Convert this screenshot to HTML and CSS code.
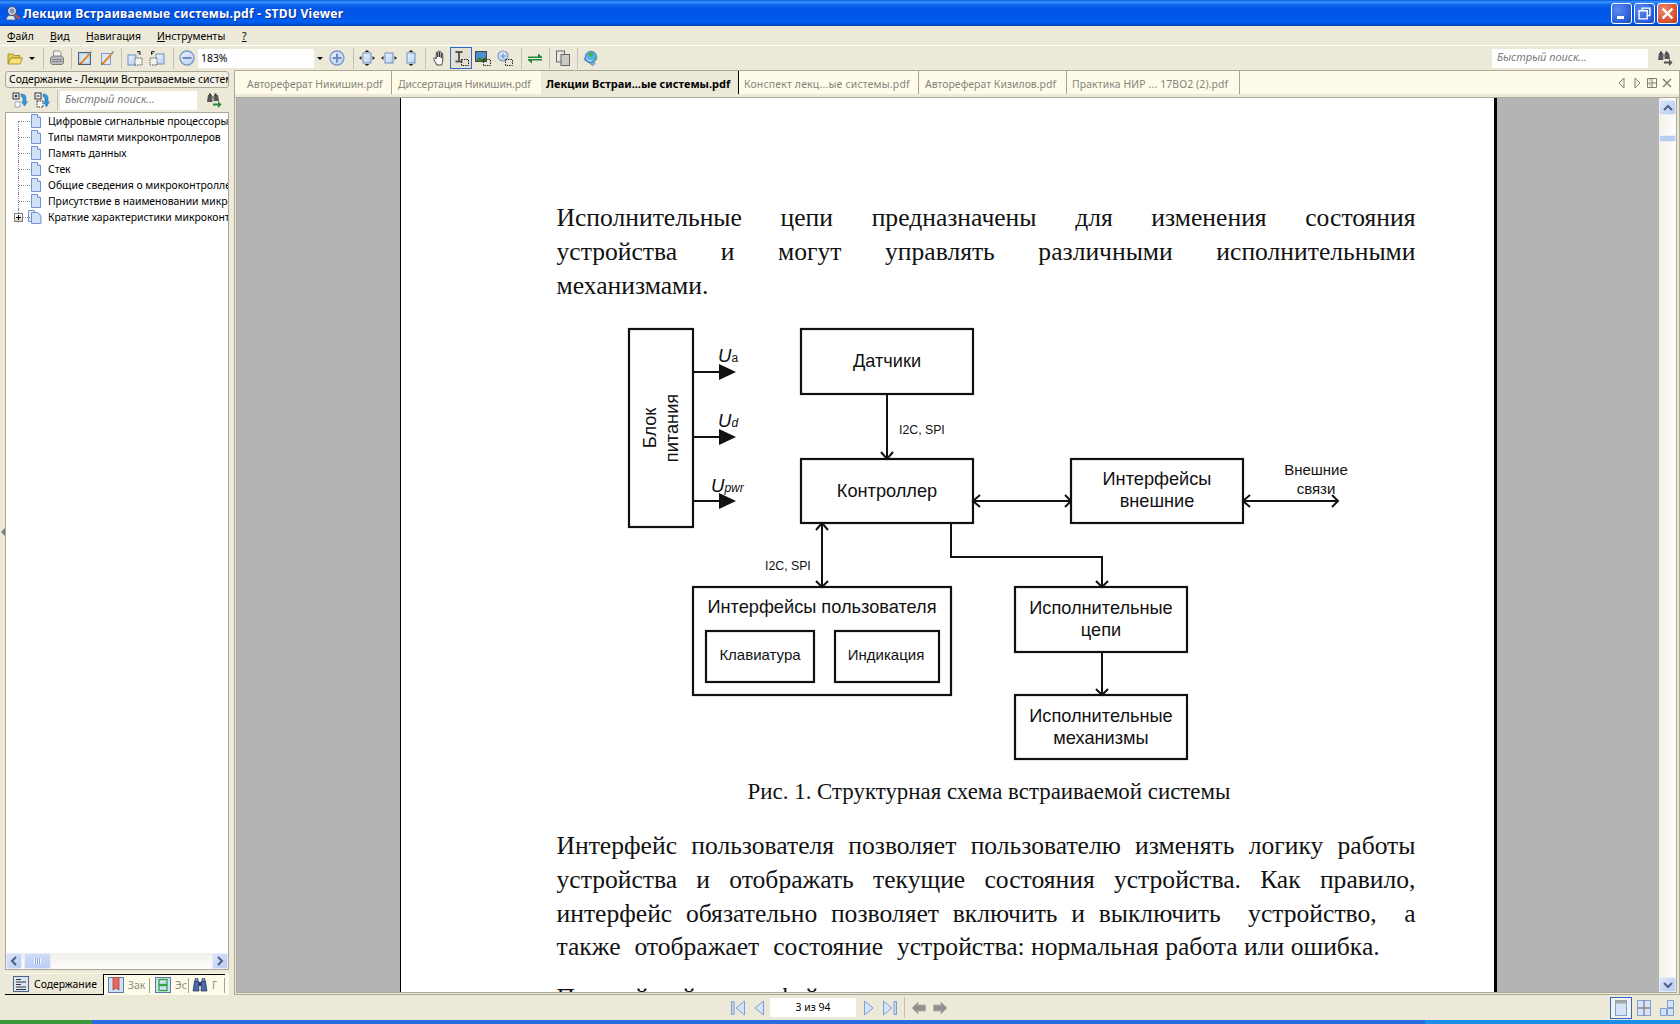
FILE: index.html
```html
<!DOCTYPE html>
<html lang="ru">
<head>
<meta charset="utf-8">
<title>STDU Viewer</title>
<link rel="stylesheet" href="styles.css">
</head>
<body>
<svg class="sprite" aria-hidden="true">
  <defs>
    <linearGradient id="gb" x1="0" y1="0" x2="1" y2="1"><stop offset="0" stop-color="#eef4fd"/><stop offset="1" stop-color="#b7cff0"/></linearGradient>
    <symbol id="i-app" viewBox="0 0 16 16"><path d="M1 15c.5-3.500 2.500-5 5-5s4 1.500 4.500 5z" fill="#dfe5ef" stroke="#4a5670" stroke-width=".8"/><circle cx="7" cy="6" r="4.500" fill="#c9d4e6" stroke="#3d4a66"/><circle cx="7" cy="6" r="2.400" fill="#7f93b8"/><path d="M10 9.500l4.500 4.500" stroke="#d0552e" stroke-width="2.400"/></symbol>
    <symbol id="i-folder" viewBox="0 0 16 16"><path d="M1 4h5l1.500 1.500H13V8H4L1 14z" fill="#e9c84f" stroke="#9a8426" stroke-width=".8"/><path d="M1 14l3-6h11.500L13 14z" fill="#f6e27c" stroke="#9a8426" stroke-width=".8"/></symbol>
    <symbol id="i-print" viewBox="0 0 16 16"><path d="M4.500 1h6l1.500 2v5h-7.500z" fill="#f4f4f4" stroke="#777" stroke-width=".8"/><path d="M1.500 8l2-2h9l2 2v5l-1.500 1.500H3L1.500 13z" fill="#b7b8bd" stroke="#666" stroke-width=".8"/><path d="M3 9.500h10M3 11.500h10" stroke="#858690"/></symbol>
    <symbol id="i-pagepen" viewBox="0 0 16 16"><rect x="1.500" y="2.500" width="12" height="12" fill="#bcd0ea" stroke="#49617f"/><rect x="3.500" y="4.500" width="8" height="8" fill="#dbe7f7"/><path d="M3.500 14l8.500-9.500" stroke="#e88a26" stroke-width="2"/><path d="M12 4.500l2.500-3" stroke="#8a8a8a" stroke-width="1.500"/><path d="M2 15l.8-2.300 1.500 1.300z" fill="#70401a"/></symbol>
    <symbol id="i-pen" viewBox="0 0 16 16"><path d="M2.500 3.500h9v11h-9z" fill="#dbe8f9" stroke="#7e9cc7"/><path d="M3.500 14l8.500-9.500" stroke="#e88a26" stroke-width="2"/><path d="M12 4.500l2.500-3" stroke="#8a8a8a" stroke-width="1.500"/><path d="M2 15l.8-2.300 1.500 1.300z" fill="#70401a"/></symbol>
    <symbol id="i-rot1" viewBox="0 0 16 16"><rect x="1" y="5" width="8" height="10" fill="url(#gb)" stroke="#6f8fc6"/><rect x="8" y="8" width="7" height="7" fill="#f4f4f0" stroke="#555" stroke-dasharray="1.500 1"/><path d="M10 1.500h3v3M13 4.500l-2-2" fill="none" stroke="#222"/></symbol>
    <symbol id="i-rot2" viewBox="0 0 16 16"><rect x="7" y="4" width="8" height="10" fill="url(#gb)" stroke="#6f8fc6"/><rect x="1" y="8" width="7" height="7" fill="#f4f4f0" stroke="#555" stroke-dasharray="1.500 1"/><path d="M5.500 1.500h-3v3M2.500 4.500l2-2" fill="none" stroke="#222"/></symbol>
    <symbol id="i-minus" viewBox="0 0 16 16"><circle cx="8" cy="8" r="7" fill="url(#gb)" stroke="#7c98c8" stroke-width="1.300"/><rect x="3.500" y="7" width="9" height="2" fill="#6e8cc1"/></symbol>
    <symbol id="i-plus" viewBox="0 0 16 16"><circle cx="8" cy="8" r="7" fill="url(#gb)" stroke="#7c98c8" stroke-width="1.300"/><path d="M3.500 7h3.500V3.500h2V7h3.500v2H9v3.500H7V9H3.500z" fill="#6e8cc1"/></symbol>
    <symbol id="i-fit" viewBox="0 0 16 16"><rect x="4" y="3" width="8" height="10" fill="url(#gb)" stroke="#6f8fc6"/><path d="M8 0l2.500 2h-5zM8 16l2.500-2h-5zM0 8l2.500-2v4zM16 8l-2.500-2v4z" fill="#222"/></symbol>
    <symbol id="i-fitw" viewBox="0 0 16 16"><rect x="4" y="3" width="8" height="10" fill="url(#gb)" stroke="#6f8fc6"/><path d="M0 8l2.500-2v4zM16 8l-2.500-2v4z" fill="#222"/></symbol>
    <symbol id="i-fith" viewBox="0 0 16 16"><rect x="4" y="3" width="8" height="10" fill="url(#gb)" stroke="#6f8fc6"/><path d="M8 0l2.500 2h-5zM8 16l2.500-2h-5z" fill="#222"/></symbol>
    <symbol id="i-hand" viewBox="1.500 0 12.500 16"><path d="M4 15C3 12 1 10 1 8.500s1.500-1 2.500.5V3c0-1.200 1.500-1.200 1.500 0V7V2c0-1.200 1.800-1.200 1.800 0v5V2.500c0-1.200 1.700-1.200 1.700 0V8V4c0-1.200 1.500-1.200 1.500 0v6c0 2-1 3-1 5z" transform="translate(1.500 0)" fill="#fdfdfd" stroke="#333" stroke-width=".9"/></symbol>
    <symbol id="i-select" viewBox="0 0 16 16"><path d="M2.500 2h7M2.500 11.500h7M6 2v9.500" stroke="#555" stroke-width="1.900" fill="none"/><rect x="8.500" y="9.500" width="7" height="6" fill="none" stroke="#222" stroke-dasharray="1.500 1"/></symbol>
    <symbol id="i-image" viewBox="0 0 16 16"><rect x=".5" y="1.500" width="11" height="10" fill="#4d8fd0" stroke="#444"/><path d="M1 11l3-4 3 2 4-2v4z" fill="#3f7d2c"/><rect x="8.500" y="9.500" width="7" height="6" fill="none" stroke="#222" stroke-dasharray="1.500 1"/></symbol>
    <symbol id="i-zoomsel" viewBox="0 0 16 16"><circle cx="6" cy="6" r="5" fill="url(#gb)" stroke="#7c98c8" stroke-width="1.200"/><path d="M3 5.500h2.500V3h1v2.500H9v1H6.500V9h-1V6.500H3z" fill="#6e8cc1"/><rect x="8.500" y="9.500" width="7" height="6" fill="none" stroke="#222" stroke-dasharray="1.500 1"/></symbol>
    <symbol id="i-sync" viewBox="0 0 16 16"><path d="M1 6.500h10V3.500l4 3.300v1.200H1zM15 10.500H5v3l-4-3.300V9h14z" fill="#1f8a3a"/></symbol>
    <symbol id="i-copy" viewBox="0 0 16 16"><rect x="1.500" y="1" width="8" height="11" fill="#e6e6e2" stroke="#666"/><rect x="6" y="4.500" width="8.500" height="11" fill="#c9c9c6" stroke="#666"/></symbol>
    <symbol id="i-globe" viewBox="0 0 16 16"><path d="M1 9.500l2-3 9 7-2 2z" fill="#8cc0ec" stroke="#40689e" stroke-width=".7"/><circle cx="8" cy="7" r="5.800" fill="#58aee8" stroke="#2f6ea8" stroke-width=".7"/><path d="M5 3.500l4-1.500 1.500 2.500-2.500 2.500-2.500-1.500zM11 8l2.500-1-1.500 4z" fill="#47b04a"/><path d="M3.500 8c1 2 3 3 5 3" fill="none" stroke="#e8f4fd"/></symbol>
    <symbol id="i-binogo" viewBox="0 0 16 16"><path d="M2 3h4l.5 7H1zM8 3h4l1 6H7.500z" fill="#555"/><path d="M3 1.500h2v2H3zM8.500 1.500h2v2h-2z" fill="#333"/><path d="M5.500 4h3v3h-3z" fill="#888"/><path d="M7 11.500h5V9l3.500 3.500L12 16v-2.500H7z" fill="#1f8a3a"/></symbol>
    <symbol id="i-binogrey" viewBox="0 0 16 16"><path d="M2 3h4l.5 7H1zM8 3h4l1 6H7.500z" fill="#555"/><path d="M3 1.500h2v2H3zM8.500 1.500h2v2h-2z" fill="#333"/><path d="M5.500 4h3v3h-3z" fill="#888"/><path d="M7 11.500h5V9l3.500 3.500L12 16v-2.500H7z" fill="#555"/></symbol>
    <symbol id="i-binoblue" viewBox="0 0 16 16"><path d="M1 14l1.500-10h4L7 14zM9 14l.5-10h4l1.500 10z" fill="#4d6aa8" stroke="#1e2f60" stroke-width=".7"/><path d="M3 1.500h3V4H3zM10 1.500h3V4h-3z" fill="#8fa8d6" stroke="#1e2f60" stroke-width=".6"/><rect x="6.500" y="5" width="3" height="4" fill="#2a3c6e"/></symbol>
    <symbol id="i-exp" viewBox="0 0 16 16"><rect x="1" y="1" width="6" height="6" fill="#eef3fb" stroke="#333"/><path d="M2.500 4h3M4 2.500v3" stroke="#111"/><path d="M9 2c4 0 5.500 2 5 6v2.500l1.500-1L12.500 14l-3-4.500 1.500 1V8c0-2-.5-3-2-3.500z" fill="#2f97dd" stroke="#1e6ba8" stroke-width=".5"/><path d="M3 10h5v5H3z" fill="#fff" stroke="#9ab"/></symbol>
    <symbol id="i-col" viewBox="0 0 16 16"><rect x="1" y="1" width="6" height="6" fill="#eef3fb" stroke="#333"/><path d="M2.500 4h3" stroke="#111"/><rect x="3" y="9" width="6" height="6" fill="#fff" stroke="#222" stroke-dasharray="1.500 1"/><path d="M9 2c4 0 5.500 2 5 6v2.500l1.500-1L12.500 15l-3-5.500 1.500 1V8c0-2-.5-3-2-3.500z" fill="#2f97dd" stroke="#1e6ba8" stroke-width=".5"/></symbol>
    <symbol id="i-doc" viewBox="0 0 12 16"><path d="M1.500 1.500h6l3 3v10h-9z" fill="#cfe0f8" stroke="#6f93cc"/><path d="M7.500 1.500v3h3" fill="#fff" stroke="#6f93cc"/></symbol>
    <symbol id="i-docs" viewBox="0 0 14 16"><path d="M.5 1.500h6v11h-6z" fill="#e6eefb" stroke="#6f93cc"/><path d="M3.500 3.500h6l3.500 3v8h-9.500z" fill="#cfe0f8" stroke="#6f93cc"/></symbol>
    <symbol id="i-contents" viewBox="0 0 16 16"><rect x=".5" y=".5" width="15" height="15" fill="#d9e4f4" stroke="#4c6488"/><path d="M3 3.500h5M3 6h10M3 8.500h5M3 11h10M3 13.500h10" stroke="#333"/></symbol>
    <symbol id="i-book" viewBox="0 0 16 16"><rect x=".5" y=".5" width="15" height="15" fill="#cfdff4" stroke="#5b7aa8"/><path d="M5 0h6v13l-3-2-3 2z" fill="#e86a5c" stroke="#8b2a22" stroke-width=".6"/></symbol>
    <symbol id="i-thumb" viewBox="0 0 16 16"><rect x=".5" y=".5" width="15" height="15" fill="#cfdff4" stroke="#5b7aa8"/><rect x="4" y="2.500" width="8" height="5" fill="none" stroke="#2faa3a" stroke-width="1.300"/><rect x="4" y="8.500" width="8" height="5" fill="none" stroke="#2faa3a" stroke-width="1.300"/></symbol>
    <symbol id="i-first" viewBox="0 0 16 16"><path d="M1.500 1.500h2.500v13H1.500z" fill="#c8d9f3" stroke="#7f9fd2"/><path d="M14.500 1v14L6 8z" fill="#d6e3f7" stroke="#7f9fd2"/></symbol>
    <symbol id="i-prev" viewBox="0 0 16 16"><path d="M12.500 1v14L4 8z" fill="#d6e3f7" stroke="#7f9fd2"/></symbol>
    <symbol id="i-next" viewBox="0 0 16 16"><path d="M3.500 1v14L12 8z" fill="#d6e3f7" stroke="#7f9fd2"/></symbol>
    <symbol id="i-last" viewBox="0 0 16 16"><path d="M1.500 1v14L10 8z" fill="#d6e3f7" stroke="#7f9fd2"/><path d="M12 1.500h2.500v13H12z" fill="#c8d9f3" stroke="#7f9fd2"/></symbol>
    <symbol id="i-back" viewBox="0 0 16 16"><path d="M7 2v3h7.500v6H7v3L1 8z" fill="#8f8f8f" stroke="#b5b4aa"/></symbol>
    <symbol id="i-fwd" viewBox="0 0 16 16"><path d="M9 2v3H1.500v6H9v3l6-6z" fill="#8f8f8f" stroke="#b5b4aa"/></symbol>
    <symbol id="i-single" viewBox="0 0 16 18"><rect x="2.500" y="1.500" width="11" height="15" fill="#d4e3f8" stroke="#7f9fd2"/><rect x="2.500" y="1.500" width="11" height="3" fill="#a9a89e"/></symbol>
    <symbol id="i-four" viewBox="0 0 16 18"><path d="M1.500 1.500h13v15h-13z" fill="#d4e3f8" stroke="#7f9fd2"/><path d="M8 1v16M1 9h14" stroke="#8a8a80" stroke-width="1.400"/></symbol>
    <symbol id="i-book2" viewBox="0 0 16 18"><path d="M8.500 1.500h6v7h-6zM1.500 9.500h6v7h-6zM8.500 9.500h6v7h-6z" fill="#d4e3f8" stroke="#7f9fd2"/></symbol>
  </defs>
</svg>

<div class="app">
  <header class="titlebar">
    <svg class="ico16 title-ico"><use href="#i-app"/></svg>
    <span class="title">Лекции Встраиваемые системы.pdf - STDU Viewer</span>
    <div class="winbtns">
      <button class="winbtn"><span class="g-min"></span></button>
      <button class="winbtn"><svg class="g-svg" viewBox="0 0 12 12"><path d="M4 3V1h7v7H9M1 3.500h7.500V11H1z" fill="none" stroke="#fff" stroke-width="1.300"/></svg></button>
      <button class="winbtn winbtn-close"><svg class="g-svg" viewBox="0 0 12 12"><path d="M1.500 1.500l9 9M10.500 1.500l-9 9" stroke="#fff" stroke-width="2"/></svg></button>
    </div>
  </header>

  <nav class="menubar">
    <span class="menu m1"><u>Ф</u>айл</span>
    <span class="menu m2"><u>В</u>ид</span>
    <span class="menu m3"><u>Н</u>авигация</span>
    <span class="menu m4"><u>И</u>нструменты</span>
    <span class="menu m5"><u>?</u></span>
  </nav>

  <div class="toolbar">
    <span class="tool"><svg class="ico16"><use href="#i-folder"/></svg></span>
    <span class="caret-slot"><span class="caret"></span></span>
    <i class="sep sep-first"></i>
    <span class="tool"><svg class="ico16"><use href="#i-print"/></svg></span>
    <i class="sep"></i>
    <span class="tool"><svg class="ico16"><use href="#i-pagepen"/></svg></span>
    <span class="tool"><svg class="ico16"><use href="#i-pen"/></svg></span>
    <i class="sep"></i>
    <span class="tool"><svg class="ico16"><use href="#i-rot1"/></svg></span>
    <span class="tool"><svg class="ico16"><use href="#i-rot2"/></svg></span>
    <i class="sep sep-far"></i>
    <span class="tool"><svg class="ico16"><use href="#i-minus"/></svg></span>
    <div class="zoombox"><span class="zoomval">183%</span><span class="zoomdrop"><span class="caret"></span></span></div>
    <span class="tool"><svg class="ico16"><use href="#i-plus"/></svg></span>
    <i class="sep sep-far"></i>
    <span class="tool"><svg class="ico16"><use href="#i-fit"/></svg></span>
    <span class="tool"><svg class="ico16"><use href="#i-fitw"/></svg></span>
    <span class="tool"><svg class="ico16"><use href="#i-fith"/></svg></span>
    <i class="sep"></i>
    <span class="tool"><svg class="ico16"><use href="#i-hand"/></svg></span>
    <span class="tool tool-on"><svg class="ico16"><use href="#i-select"/></svg></span>
    <span class="tool"><svg class="ico16"><use href="#i-image"/></svg></span>
    <span class="tool"><svg class="ico16"><use href="#i-zoomsel"/></svg></span>
    <i class="sep sep-far"></i>
    <span class="tool"><svg class="ico16"><use href="#i-sync"/></svg></span>
    <i class="sep"></i>
    <span class="tool"><svg class="ico16"><use href="#i-copy"/></svg></span>
    <i class="sep"></i>
    <span class="tool"><svg class="ico16"><use href="#i-globe"/></svg></span>
    <span class="grow"></span>
    <div class="search search-top">Быстрый поиск...</div>
    <span class="tool tool-end"><svg class="ico16"><use href="#i-binogrey"/></svg></span>
  </div>

  <div class="main">
    <aside class="side">
      <svg class="grip" viewBox="0 0 4 8"><path d="M4 0v8L0 4z" fill="#7d7b70"/></svg>
      <div class="side-head">Содержание - Лекции Встраиваемые систем</div>
      <div class="side-tools">
        <span class="tool"><svg class="ico16"><use href="#i-exp"/></svg></span>
        <span class="tool"><svg class="ico16"><use href="#i-col"/></svg></span>
        <i class="sep side-sep"></i>
        <div class="search search-side">Быстрый поиск...</div>
        <span class="tool side-go"><svg class="ico16"><use href="#i-binogo"/></svg></span>
      </div>
      <div class="tree">
        <ul class="tree-list">
          <li class="row"><span class="twig twig-first"></span><svg class="ico-doc"><use href="#i-doc"/></svg><span class="row-t">Цифровые сигнальные процессоры</span></li>
          <li class="row"><span class="twig"></span><svg class="ico-doc"><use href="#i-doc"/></svg><span class="row-t">Типы памяти микроконтроллеров</span></li>
          <li class="row"><span class="twig"></span><svg class="ico-doc"><use href="#i-doc"/></svg><span class="row-t">Память данных</span></li>
          <li class="row"><span class="twig"></span><svg class="ico-doc"><use href="#i-doc"/></svg><span class="row-t">Стек</span></li>
          <li class="row"><span class="twig"></span><svg class="ico-doc"><use href="#i-doc"/></svg><span class="row-t">Общие сведения о микроконтроллерах</span></li>
          <li class="row"><span class="twig"></span><svg class="ico-doc"><use href="#i-doc"/></svg><span class="row-t">Присутствие в наименовании микроконтроллеров</span></li>
          <li class="row"><span class="twig twig-last"><span class="expander"></span></span><svg class="ico-docs"><use href="#i-docs"/></svg><span class="row-t">Краткие характеристики микроконтроллеров</span></li>
        </ul>
        <div class="hscroll">
          <span class="sb-btn"><svg class="sb-chev" viewBox="0 0 8 10"><path d="M6 1L2 5l4 4" fill="none" stroke="#4d6185" stroke-width="2"/></svg></span>
          <span class="sb-thumb"><span class="sb-lines"></span></span>
          <span class="grow"></span>
          <span class="sb-btn"><svg class="sb-chev" viewBox="0 0 8 10"><path d="M2 1l4 4-4 4" fill="none" stroke="#4d6185" stroke-width="2"/></svg></span>
        </div>
      </div>
      <div class="side-tabs">
        <div class="stab stab-on"><svg class="ico16"><use href="#i-contents"/></svg><span>Содержание</span></div>
        <div class="stab stab-a"><svg class="ico16"><use href="#i-book"/></svg><span>Зак</span></div>
        <div class="stab stab-b"><svg class="ico16"><use href="#i-thumb"/></svg><span>Эс</span></div>
        <div class="stab stab-c"><svg class="ico16"><use href="#i-binoblue"/></svg><span>Г</span></div>
      </div>
    </aside>

    <section class="work">
      <div class="tabstrip">
        <div class="tabs">
          <span class="tab tab-1">Автореферат Никишин.pdf</span>
          <span class="tab tab-2">Диссертация Никишин.pdf</span>
          <span class="tab tab-on">Лекции Встраи...ые системы.pdf</span>
          <span class="tab tab-4">Конспект лекц...ые системы.pdf</span>
          <span class="tab tab-5">Автореферат Кизилов.pdf</span>
          <span class="tab tab-6">Практика НИР ... 17ВО2 (2).pdf</span>
        </div>
        <div class="tab-ctrls">
          <svg class="tc" viewBox="0 0 10 12"><path d="M7 1v10L2 6z" fill="none" stroke="#807e72"/></svg>
          <svg class="tc" viewBox="0 0 10 12"><path d="M3 1v10l5-5z" fill="none" stroke="#807e72"/></svg>
          <svg class="tc" viewBox="0 0 10 12"><path d="M.5 1.500h9v9h-9zM5 1.500v9M.5 6h9M2 3h1.500M2 8h1.500" fill="none" stroke="#807e72"/></svg>
          <svg class="tc" viewBox="0 0 10 12"><path d="M1 2l8 8M9 2l-8 8" stroke="#807e72" stroke-width="1.400"/></svg>
        </div>
      </div>

      <div class="docframe">
        <div class="docview">
          <div class="canvas">
            <article class="page">
              <p class="para">
                <span class="line">Исполнительные цепи предназначены для изменения состояния</span>
                <span class="line">устройства и могут управлять различными исполнительными</span>
                <span class="line line-end">механизмами.</span>
              </p>
              <svg class="diagram" viewBox="557 302 859 470">
                <g class="d-box">
                  <rect x="629" y="329" width="64" height="198"/>
                  <rect x="801" y="329" width="172" height="65"/>
                  <rect x="801" y="459" width="172" height="64"/>
                  <rect x="1071" y="459" width="172" height="64"/>
                  <rect x="693" y="587" width="258" height="108"/>
                  <rect x="706" y="631" width="108" height="51"/>
                  <rect x="835" y="631" width="104" height="51"/>
                  <rect x="1015" y="587" width="172" height="65"/>
                  <rect x="1015" y="695" width="172" height="64"/>
                </g>
                <g class="d-line">
                  <path d="M693 372h28M693 437h28M693 501h28"/>
                  <path d="M887 394v64M881 452l6 7 6-7"/>
                  <path d="M973 501h98M980 495l-7 6 7 6M1065 495l6 6-6 6"/>
                  <path d="M951 523v34h151v30M1096 581l6 6 6-6"/>
                  <path d="M1102 652v43M1096 689l6 6 6-6"/>
                  <path d="M822 523v64M816 530l6-7 6 7M816 581l6 6 6-6"/>
                  <path d="M1243 501h95M1250 495l-7 6 7 6M1332 495l6 6-6 6"/>
                </g>
                <path class="d-fill" d="M719 364l17 8-17 8zM719 429l17 8-17 8zM719 493l17 8-17 8z"/>
                <g class="d-text">
                  <text class="d-l d-mid" x="887" y="367">Датчики</text>
                  <text class="d-l d-mid" x="887" y="497">Контроллер</text>
                  <text class="d-l d-mid" x="1157" y="485">Интерфейсы</text>
                  <text class="d-l d-mid" x="1157" y="507">внешние</text>
                  <text class="d-l d-mid" x="822" y="613">Интерфейсы пользователя</text>
                  <text class="d-s d-mid" x="760" y="660">Клавиатура</text>
                  <text class="d-s d-mid" x="886" y="660">Индикация</text>
                  <text class="d-l d-mid" x="1101" y="614">Исполнительные</text>
                  <text class="d-l d-mid" x="1101" y="636">цепи</text>
                  <text class="d-l d-mid" x="1101" y="722">Исполнительные</text>
                  <text class="d-l d-mid" x="1101" y="744">механизмы</text>
                  <text class="d-s d-mid" x="1316" y="475">Внешние</text>
                  <text class="d-s d-mid" x="1316" y="494">связи</text>
                  <text class="d-x" x="899" y="434">I2C, SPI</text>
                  <text class="d-x" x="765" y="570">I2C, SPI</text>
                  <text class="d-l d-mid" transform="rotate(-90 656 428)" x="656" y="428">Блок</text>
                  <text class="d-l d-mid" transform="rotate(-90 678 428)" x="678" y="428">питания</text>
                  <text class="d-u" x="718" y="362">U<tspan class="d-sub">a</tspan></text>
                  <text class="d-u" x="718" y="427">U<tspan class="d-sub d-it">d</tspan></text>
                  <text class="d-u" x="711" y="492">U<tspan class="d-sub d-it">pwr</tspan></text>
                </g>
              </svg>
              <p class="caption">Рис. 1. Структурная схема встраиваемой системы</p>
              <p class="para para-2">
                <span class="line">Интерфейс пользователя позволяет пользователю изменять логику работы</span>
                <span class="line">устройства и отображать текущие состояния устройства. Как правило,</span>
                <span class="line">интерфейс обязательно позволяет включить и выключить&nbsp; устройство,&nbsp; а</span>
                <span class="line line-end"><span class="spread">также отображает состояние устройства:</span> нормальная работа или ошибка.</span>
              </p>
              <p class="para para-3"><span class="line line-end">Простейший интерфейс пользователя</span></p>
            </article>
          </div>
          <div class="vscroll">
            <span class="vs-btn"><svg class="vs-chev" viewBox="0 0 10 8"><path d="M1 6l4-4 4 4" fill="none" stroke="#4d6185" stroke-width="2"/></svg></span>
            <span class="vs-thumb"></span>
            <span class="grow"></span>
            <span class="vs-btn"><svg class="vs-chev" viewBox="0 0 10 8"><path d="M1 2l4 4 4-4" fill="none" stroke="#4d6185" stroke-width="2"/></svg></span>
          </div>
        </div>
      </div>
    </section>
  </div>

  <footer class="status">
    <span class="nav"><svg class="ico16"><use href="#i-first"/></svg></span>
    <span class="nav"><svg class="ico16"><use href="#i-prev"/></svg></span>
    <div class="pagebox">3 из 94</div>
    <span class="nav nav-next"><svg class="ico16"><use href="#i-next"/></svg></span>
    <span class="nav"><svg class="ico16"><use href="#i-last"/></svg></span>
    <i class="sep st-sep"></i>
    <span class="nav"><svg class="ico16"><use href="#i-back"/></svg></span>
    <span class="nav"><svg class="ico16"><use href="#i-fwd"/></svg></span>
    <span class="grow"></span>
    <span class="view view-on"><svg class="ico-view"><use href="#i-single"/></svg></span>
    <span class="view"><svg class="ico-view"><use href="#i-four"/></svg></span>
    <span class="view"><svg class="ico-view"><use href="#i-book2"/></svg></span>
  </footer>

  <div class="taskbar"><span class="start"></span><span class="grow"></span><span class="tray"></span></div>
</div>
</body>
</html>
```

FILE: styles.css
```css
* { box-sizing: border-box; }
html, body { margin: 0; padding: 0; height: 100%; overflow: hidden; }
body { font-family: "Noto Sans", "Liberation Sans", sans-serif; font-size: 10.4px; color: #000; background: #ece9d8; }
.sprite { position: absolute; width: 0; height: 0; }
.app { width: 1680px; height: 1024px; display: flex; flex-direction: column; background: #ece9d8; }
.grow { flex: 1; }
.ico16 { width: 16px; height: 16px; display: block; flex: none; }

/* title bar */
.titlebar { height: 26px; flex: none; display: flex; align-items: center; padding-left: 5px;
  background: linear-gradient(#0a5bdc 0, #3a93ff 2px, #0a62ea 5px, #0055e5 10px, #0058ea 17px, #0060f0 22px, #0050d8 24px, #003eb0 26px); }
.title-ico { margin-right: 2px; }
.title { color: #fff; font: bold 12.1px "Noto Sans", sans-serif; letter-spacing: .22px; text-shadow: 1px 1px 0 #0f2f90; white-space: nowrap; }
.winbtns { margin-left: auto; display: flex; gap: 2px; padding-right: 2px; }
.winbtn { width: 21px; height: 21px; padding: 0; border: 1px solid #fff; border-radius: 3px; display: flex; align-items: center; justify-content: center;
  background: radial-gradient(circle at 30% 30%, #5a8af0, #2a5ed8 70%, #1c47b8); }
.winbtn-close { background: radial-gradient(circle at 30% 30%, #ea8a6c, #d8502a 70%, #b83a18); }
.g-min { width: 7px; height: 3px; background: #fff; margin-top: 8px; margin-right: 3px; }
.g-svg { width: 13px; height: 13px; }

/* menu */
.menubar { height: 20px; flex: none; display: flex; align-items: center; border-bottom: 1px solid #fff; padding-left: 7px; }
.menu { font-size: 10.4px; white-space: nowrap; }
.m1 { width: 43px; }
.m2 { width: 36px; }
.m3 { width: 71px; }
.m4 { width: 85px; }

/* toolbar */
.toolbar { height: 24px; flex: none; display: flex; align-items: center; padding-left: 4px; }
.tool { width: 22px; height: 22px; flex: none; display: flex; align-items: center; justify-content: center; }
.tool-on { background: #e4e1d3; outline: 1px solid #316ac5; outline-offset: -1px; }
.tool-end { margin-right: 4px; margin-left: 6px; }
.caret-slot { width: 11px; display: flex; justify-content: center; }
.caret { width: 0; height: 0; border: 3px solid transparent; border-top: 3px solid #000; margin-top: 3px; display: block; }
.sep { width: 1px; height: 21px; flex: none; background: #c5c2b2; margin: 0 2px 0 3px; }
.sep-first { margin-left: 6px; }
.sep-far { margin-left: 5px; }
.zoombox { width: 128px; height: 19px; flex: none; background: #fff; display: flex; align-items: center; justify-content: space-between; padding: 0 0 0 3px; font-size: 10.4px; }
.zoomval { padding-bottom: 1px; }
.zoomdrop { width: 12px; height: 19px; background: #ece9d8; display: flex; justify-content: center; align-items: center; }
.search { background: #fff; color: #7a7a7a; font-style: italic; font-size: 11px; height: 19px; display: flex; align-items: center; padding: 0 0 3px 5px; flex: none; white-space: nowrap; }
.search-top { width: 156px; }

/* main */
.main { flex: 1; display: flex; min-height: 0; }
.side { width: 234px; flex: none; padding: 1px 5px 0; display: flex; flex-direction: column; position: relative; }
.grip { position: absolute; left: 1px; top: 458px; width: 4px; height: 8px; }
.side-head { height: 17px; flex: none; border: 1px solid #aca899; border-radius: 3px; padding-left: 3px; font-size: 10.4px; line-height: 14px; overflow: hidden; white-space: nowrap; background: #f1efe2; }
.side-tools { height: 24px; flex: none; display: flex; align-items: center; padding-left: 4px; }
.side-sep { margin: 0 2px 0 4px; height: 20px; }
.search-side { width: 137px; }
.side-go { margin-left: 6px; }
.tree { flex: 1; min-height: 0; border: 1px solid #aca899; background: #fff; display: flex; flex-direction: column; overflow: hidden; }
.tree-list { list-style: none; margin: 0; padding: 0; flex: 1; overflow: hidden; }
.row { height: 16px; display: flex; align-items: center; padding-left: 12px; white-space: nowrap; }
.row-t { margin: 0 0 1px 6px; font-size: 10.4px; }
.ico-doc { width: 12px; height: 16px; flex: none; }
.ico-docs { width: 14px; height: 16px; flex: none; margin-left: -2px; }
.twig { width: 12px; height: 16px; flex: none; position: relative; border-left: 1px dotted #8a8a8a; }
.twig::after { content: ""; position: absolute; left: 0; right: 0; top: 8px; border-top: 1px dotted #8a8a8a; }
.twig-first { height: 8px; align-self: flex-end; }
.twig-first::after { top: 0; }
.twig-last { height: 8px; align-self: flex-start; }
.expander { position: absolute; left: -5px; top: 4px; width: 9px; height: 9px; background: linear-gradient(#fff, #d5d2c4); border: 1px solid #7f7f7f; z-index: 1; }
.expander::before { content: ""; position: absolute; left: 1px; right: 1px; top: 3px; height: 1px; background: #000; }
.expander::after { content: ""; position: absolute; top: 1px; bottom: 1px; left: 3px; width: 1px; background: #000; }
.hscroll { height: 16px; flex: none; display: flex; background: linear-gradient(#f1efe8, #fdfdfb); }
.sb-btn { width: 16px; height: 16px; flex: none; background: linear-gradient(135deg, #dbe6fa, #b8caf0); border: 1px solid #e6ecf8; border-radius: 2px; display: flex; align-items: center; justify-content: center; }
.sb-chev { width: 8px; height: 10px; }
.sb-thumb { width: 27px; margin-left: 2px; background: linear-gradient(#cfdcf6, #bccdf2); border: 1px solid #e6ecf8; border-radius: 2px; display: flex; justify-content: center; align-items: center; }
.sb-lines { width: 7px; height: 6px; background: repeating-linear-gradient(90deg, #eef3fd 0 1px, #8da7dc 1px 2px); }
.side-tabs { height: 22px; flex: none; margin-top: 3px; background: #fefbe9; border-top: 1px solid transparent; display: flex; font-size: 10.4px; color: #8a8a80; }
.stab { display: flex; align-items: center; gap: 4px; height: 21px; border-top: 1px solid #000; overflow: hidden; white-space: nowrap; position: relative; }
.stab::after { content: ""; position: absolute; right: 0; top: 3px; height: 15px; width: 1px; background: #a6a498; }
.stab-on { width: 99px; padding-left: 8px; background: #ece9d8; color: #000; border-top: 0; gap: 5px; border-right: 1px solid #000; border-bottom: 1px solid #000; }
.stab-on::after { display: none; }
.stab-a { width: 46px; padding-left: 4px; }
.stab-b { width: 39px; padding-left: 5px; }
.stab-c { width: 36px; padding-left: 3px; }

/* tabs */
.work { flex: 1; min-width: 0; display: flex; flex-direction: column; }
.tabstrip { height: 28px; flex: none; border: 1px solid #aca899; display: flex; background: #ece9d8; padding-bottom: 3px; }
.tabs { flex: 1; display: grid; grid-template-columns: 157px 149px 198px 180px 148px 173px 1fr; background: #fefbe9; }
.tab { display: flex; align-items: center; padding: 2px 0 0 7px; border-right: 1px solid #a6a498; color: #84847c; font-size: 10.4px; white-space: nowrap; overflow: hidden; height: 23px; }
.tab-1 { padding-left: 12px; }
.tab-2 { border-right: 0; padding-left: 6px; letter-spacing: -.12px; }
.tab-on { background: #ece9d8; color: #000; font-weight: 700; font-size: 11px; padding-left: 5px; border-right: 1px solid #000; }
.tab-4 { padding-left: 5px; letter-spacing: .2px; }
.tab-5 { padding-left: 6px; letter-spacing: .05px; }
.tab-6 { padding-left: 5px; letter-spacing: .13px; }
.tab-ctrls { display: flex; align-items: center; gap: 5px; padding-right: 7px; background: #fefbe9; }
.tc { width: 10px; height: 12px; display: block; }

/* document */
.docframe { flex: 1; min-height: 0; display: flex; background: #ece9d8; border: 1px solid #aca899; border-top: 0; padding: 0 2px 1px 1px; }
.docview { flex: 1; min-width: 0; display: flex; border: 1px solid #aca899; border-top: 0; }
.canvas { flex: 1; min-width: 0; background: #b4b4b4; display: flex; justify-content: center; overflow: hidden; }
.page { width: 1097px; flex: none; background: #fff; border-left: 1px solid #000; border-right: 3px solid #000; padding: 103px 78px 0 156px; overflow: hidden; }
.para { margin: 0; font: 25.6px/33.9px "Liberation Serif", serif; color: #111; }
.line { display: block; white-space: normal; text-align: justify; text-align-last: justify; }
.line-end { text-align-last: left; white-space: nowrap; }
.spread { word-spacing: 7.5px; }
.para-2 { margin-top: 22px; }
.para-3 { margin-top: 17px; }
.para-3 .line { word-spacing: 12px; }
.caption { margin: 5px 0 0; padding-left: 6px; font: 22.9px/30px "Liberation Serif", serif; text-align: center; color: #111; height: 30px; white-space: nowrap; }
.diagram { display: block; width: 859px; height: 470px; margin-top: -1px; }
.d-box rect { fill: none; stroke: #111; stroke-width: 2.2; }
.d-line path { fill: none; stroke: #111; stroke-width: 2; }
.d-fill { fill: #111; }
.d-text text { font-family: "Liberation Sans", sans-serif; fill: #111; }
.d-l { font-size: 18.2px; }
.d-s { font-size: 15px; }
.d-x { font-size: 12.3px; }
.d-mid { text-anchor: middle; }
.d-u { font-size: 18.5px; font-style: italic; }
.d-sub { font-size: 12px; font-style: normal; }
.d-it { font-style: italic; }
.vscroll { width: 17px; flex: none; background: linear-gradient(90deg, #f3f1ea, #fdfdfb); display: flex; flex-direction: column; padding-top: 2px; }
.vs-btn { height: 15px; flex: none; background: linear-gradient(135deg, #dbe6fa, #b8caf0); border: 1px solid #e6ecf8; border-radius: 2px; display: flex; align-items: center; justify-content: center; }
.vs-chev { width: 10px; height: 8px; }
.vs-thumb { height: 7px; margin-top: 20px; background: #b9ccf2; border: 1px solid #e6ecf8; border-radius: 2px; flex: none; }

/* status */
.status { height: 25px; flex: none; display: flex; align-items: center; padding: 0 2px 0 727px; }
.nav { width: 21px; height: 20px; flex: none; display: flex; align-items: center; justify-content: center; }
.nav-next { margin-left: 2px; }
.pagebox { width: 86px; height: 19px; flex: none; margin-left: 1px; background: #fff; text-align: center; line-height: 18px; font-size: 10.4px; }
.st-sep { margin: 0 3px 0 4px; }
.view { width: 22px; height: 22px; flex: none; margin-left: 1px; display: flex; align-items: center; justify-content: center; }
.view-on { outline: 1px solid #316ac5; outline-offset: -1px; background: #f3f1e8; }
.ico-view { width: 16px; height: 18px; display: block; }

/* taskbar */
.taskbar { height: 4px; flex: none; display: flex; background: #2a6be0; }
.start { width: 92px; background: #3c9a3c; }
.tray { width: 255px; background: #1a8ee8; }
```
